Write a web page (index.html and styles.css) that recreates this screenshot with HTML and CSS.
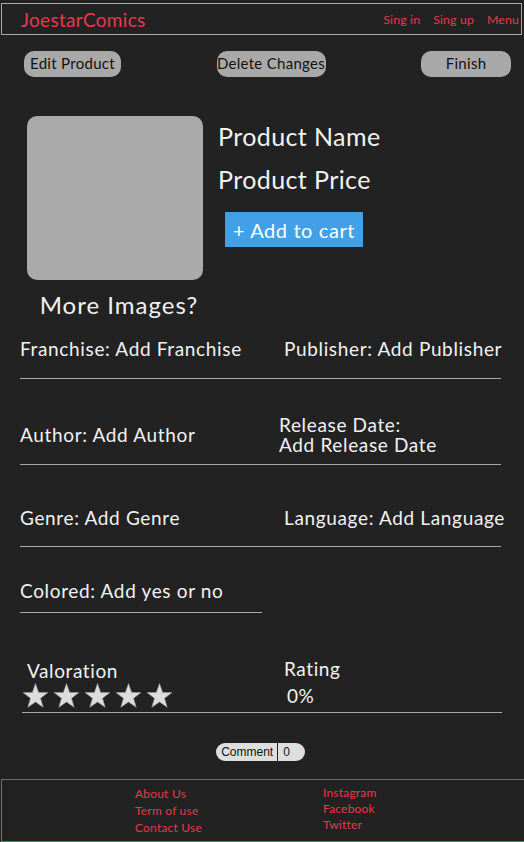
FILE: index.html
```html
<!DOCTYPE html>
<html lang="en">
<head>
<meta charset="utf-8">
<title>JoestarComics</title>
<link rel="stylesheet" href="styles.css">
</head>
<body>
<header class="topbar">
  <a class="brand" href="#">JoestarComics</a>
  <nav class="nav">
    <a href="#">Sing in</a>
    <a href="#">Sing up</a>
    <a href="#">Menu</a>
  </nav>
</header>

<div class="actions">
  <button class="pill pill-edit">Edit Product</button>
  <button class="pill pill-delete">Delete Changes</button>
  <button class="pill pill-finish">Finish</button>
</div>

<section class="product">
  <div class="gallery">
    <div class="photo"></div>
    <div class="more">More Images?</div>
  </div>
  <div class="info">
    <h1 class="title">Product Name</h1>
    <h2 class="price">Product Price</h2>
    <button class="cart">+ Add to cart</button>
  </div>
</section>

<section class="details">
  <div class="row row-1">
    <div class="cell">Franchise: Add Franchise</div>
    <div class="cell cell-right">Publisher: Add Publisher</div>
  </div>
  <div class="row row-2">
    <div class="cell">Author: Add Author</div>
    <div class="cell cell-right cell-release"><span class="line">Release Date:</span><span class="line">Add Release Date</span></div>
  </div>
  <div class="row row-3">
    <div class="cell">Genre: Add Genre</div>
    <div class="cell cell-right">Language: Add Language</div>
  </div>
  <div class="row row-4">
    <div class="cell">Colored: Add yes or no</div>
  </div>
</section>

<section class="rating">
  <div class="rate-col">
    <div class="rate-label">Valoration</div>
    <svg class="stars" width="154" height="26" viewBox="0 0 154 26" aria-label="stars">
      <g fill="#dcdcdc" stroke="#9a9a9a" stroke-width="0.6">
        <polygon points="13.5,0.5 16.6,9.4 26,9.6 18.5,15.3 21.2,24.3 13.5,18.9 5.8,24.3 8.5,15.3 1,9.6 10.4,9.4"/>
        <polygon transform="translate(31 0)" points="13.5,0.5 16.6,9.4 26,9.6 18.5,15.3 21.2,24.3 13.5,18.9 5.8,24.3 8.5,15.3 1,9.6 10.4,9.4"/>
        <polygon transform="translate(62 0)" points="13.5,0.5 16.6,9.4 26,9.6 18.5,15.3 21.2,24.3 13.5,18.9 5.8,24.3 8.5,15.3 1,9.6 10.4,9.4"/>
        <polygon transform="translate(93 0)" points="13.5,0.5 16.6,9.4 26,9.6 18.5,15.3 21.2,24.3 13.5,18.9 5.8,24.3 8.5,15.3 1,9.6 10.4,9.4"/>
        <polygon transform="translate(124 0)" points="13.5,0.5 16.6,9.4 26,9.6 18.5,15.3 21.2,24.3 13.5,18.9 5.8,24.3 8.5,15.3 1,9.6 10.4,9.4"/>
      </g>
    </svg>
  </div>
  <div class="rate-col rate-col-right">
    <div class="rate-label">Rating</div>
    <div class="percent">0%</div>
  </div>
</section>

<div class="comment-wrap">
  <div class="comment"><span class="comment-label">Comment</span><span class="comment-count">0</span></div>
</div>

<footer class="footer">
  <ul class="links links-left">
    <li><a href="#">About Us</a></li>
    <li><a href="#">Term of use</a></li>
    <li><a href="#">Contact Use</a></li>
  </ul>
  <ul class="links links-right">
    <li><a href="#">Instagram</a></li>
    <li><a href="#">Facebook</a></li>
    <li><a href="#">Twitter</a></li>
  </ul>
</footer>
</body>
</html>
```

FILE: styles.css
```css
* { box-sizing: border-box; }

html, body {
  margin: 0;
  padding: 0;
  background: #222222;
  overflow: hidden;
}

body {
  font-family: Lato, "Open Sans", sans-serif;
  color: #f2f2f2;
  width: 524px;
  height: 842px;
}

a { text-decoration: none; color: inherit; }

/* header */
.topbar {
  margin: 3px 2px 0 1px;
  height: 32px;
  border: 1px solid #a9a9a9;
  display: flex;
  align-items: center;
  justify-content: space-between;
  padding: 0 2px 0 19px;
}

.brand {
  color: #e8384f;
  font-size: 19px;
  letter-spacing: 0.3px;
}

.nav {
  display: flex;
  gap: 13px;
  font-size: 12.3px;
  letter-spacing: 0.15px;
  color: #e8384f;
}

/* action buttons */
.actions {
  display: flex;
  justify-content: space-between;
  padding: 0 13px 0 24px;
  margin-top: 16px;
}

.pill {
  height: 26px;
  border: none;
  border-radius: 10px;
  background: #a9a9a9;
  color: #111;
  font-family: Lato, sans-serif;
  font-size: 15px;
  letter-spacing: 0.3px;
  padding: 0 0 3px;
}

.pill-edit { width: 97px; }
.pill-delete { width: 109px; }
.pill-finish { width: 90px; }

/* product */
.product {
  display: flex;
  margin-top: 39px;
  padding-left: 27px;
  gap: 15px;
}

.gallery {
  display: flex;
  flex-direction: column;
  align-items: center;
  width: 176px;
}

.photo {
  width: 176px;
  height: 164px;
  border-radius: 10px;
  background: #aaaaaa;
}

.more {
  margin-top: 12px;
  font-size: 24px;
  letter-spacing: 1px;
  line-height: 26px;
  padding-left: 8px;
  white-space: nowrap;
}

.info {
  display: flex;
  flex-direction: column;
  align-items: flex-start;
}

.title, .price {
  margin: 0;
  font-weight: normal;
  font-size: 25px;
  letter-spacing: 0.4px;
  line-height: 30px;
}

.title { margin-top: 5px; }
.price { margin-top: 13px; }

.cart {
  margin: 18px 0 0 7px;
  width: 138px;
  height: 35px;
  border: none;
  background: #42a1e6;
  color: #fff;
  font-family: Lato, sans-serif;
  font-size: 20px;
  letter-spacing: 0.6px;
  padding: 0;
}

/* details */
.details {
  padding: 0 23px 0 20px;
}

.row {
  display: grid;
  grid-template-columns: 264px 1fr;
  align-items: center;
  border-bottom: 1px solid #a9a9a9;
  font-size: 19px;
  letter-spacing: 0.65px;
  line-height: 22px;
  white-space: nowrap;
}

.cell-release {
  margin-left: -5px;
  display: flex;
  flex-direction: column;
}

.cell-release .line {
  display: block;
  line-height: 20px;
}

.row-1 { padding: 20px 0 18px; }
.row-2 { padding: 36px 0 9px; }
.row-3 { padding: 42px 0 17px; }
.row-4 { padding: 33px 0 10px; width: 242px; grid-template-columns: 1fr; }

/* rating */
.rating {
  display: grid;
  grid-template-columns: 262px 1fr;
  margin: 47px 22px 0 22px;
  border-bottom: 1px solid #a9a9a9;
  padding-bottom: 3px;
}

.rate-col { display: flex; flex-direction: column; }

.rate-label {
  font-size: 19px;
  letter-spacing: 0.6px;
  line-height: 22px;
  padding-left: 5px;
}

.rate-col-right .rate-label { padding-left: 0; margin-top: -2px; }

.stars { display: block; margin-top: 1px; }

.percent {
  font-size: 19px;
  letter-spacing: 0.6px;
  line-height: 22px;
  padding-left: 3px;
  margin-top: 5px;
}

/* comment */
.comment-wrap {
  display: flex;
  justify-content: center;
  margin-top: 30px;
  padding-right: 3px;
}

.comment {
  display: flex;
  height: 18px;
  background: #dedede;
  border-radius: 9px;
  font-family: "Liberation Sans", Arial, sans-serif;
  font-size: 12px;
  line-height: 18px;
  color: #111;
  overflow: hidden;
}

.comment-label {
  padding: 0 4px 0 5px;
  border-right: 1px solid #222;
}

.comment-count {
  padding: 0 15px 0 5px;
}

/* footer */
.footer {
  margin: 18px 0 0 1px;
  height: 63px;
  border: 1px solid #3b8a68;
  border-right: none;
  display: flex;
  padding: 5px 0 0 133px;
}

.links {
  list-style: none;
  margin: 0;
  padding: 0;
  font-size: 12px;
  letter-spacing: 0.2px;
  color: #e8384f;
}

.links-left { width: 134px; }
.links-left li { line-height: 17px; }
.links-right { margin-left: 54px; }
.links-right li { line-height: 16px; }
```
